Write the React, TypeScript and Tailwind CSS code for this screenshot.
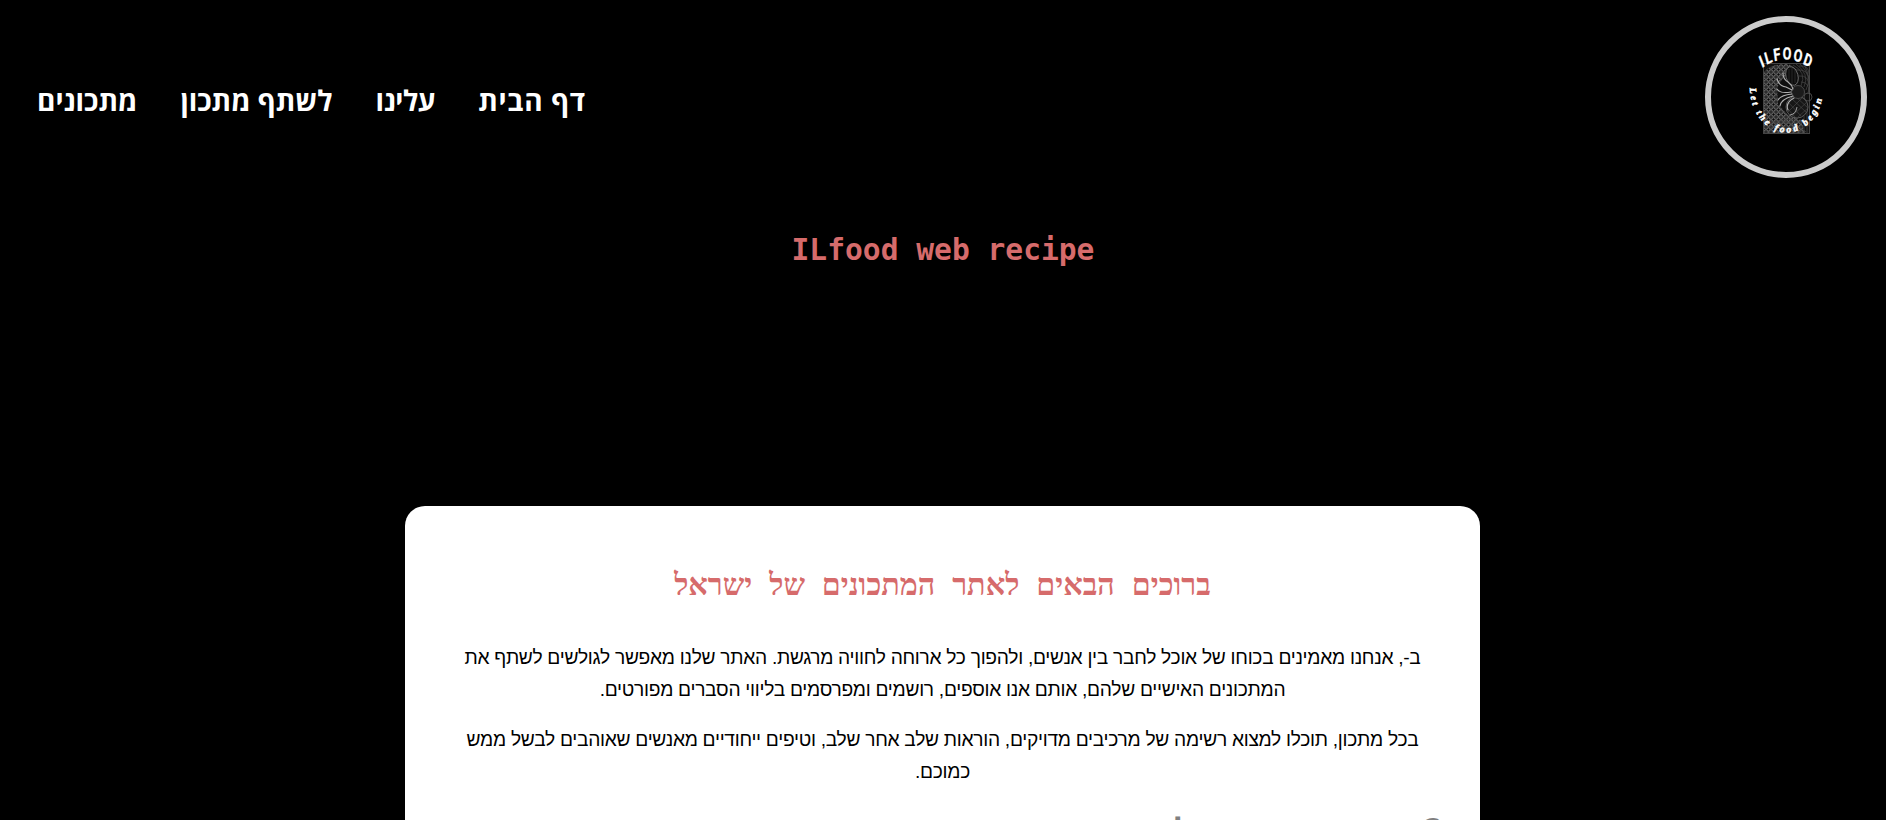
export default function App() {
  return (
    <div dir="rtl" className="h-[820px] overflow-hidden bg-black font-['Liberation_Sans',sans-serif]">
      <header className="flex h-[195px] items-start justify-between pt-4 pr-[19px] pl-[37px]">
        <div className="size-[162px] rounded-full border-[6px] border-[#ccc]">
          <svg viewBox="0 0 150 150" className="size-[150px]">
            <defs>
              <path id="top-arc" d="M68 46 Q100 28 136 48" />
              <path id="low-arc" d="M39 66 A36.5 44.5 0 0 0 112 66" />
              <pattern id="lace" width="5" height="5" patternUnits="userSpaceOnUse">
                <rect width="5" height="5" fill="#2c2c2c" />
                <circle cx="2.500" cy="2.500" r="1.700" fill="#080808" stroke="#8a8a8a" strokeWidth=".8" />
              </pattern>
            </defs>
            <rect x="52.500" y="41.500" width="46" height="70" fill="#101010" stroke="#444" />
            <path d="M53 50Q60 41 78 42L86 48 72 56 66 66 67 82 76 92 90 98 94 111H53Z" fill="url(#lace)" />
            <g fill="none" stroke="#484848" strokeWidth=".7">
              <path d="M82 43Q96 50 90 64M85 42Q99 52 93 65M89 42Q102 54 95 68M93 42Q101 58 97 72M88 44Q98 43 98 52M86 48Q98 47 98 58M88 54Q98 53 98 64M90 60Q98 60 98 70" />
              <path d="M56 110Q72 92 95 110M58 105Q76 90 98 104M60 100Q75 94 90 110M93 94V111M96 88V111" />
            </g>
            <ellipse cx="81" cy="54" rx="6" ry="9.500" fill="#0c0c0c" stroke="#777" strokeWidth=".8" transform="rotate(-15 81 54)" />
            <path d="M78 47V60M81 46V62M84 48V61" stroke="#3a3a3a" strokeWidth=".6" />
            <circle cx="86" cy="85" r="11" fill="#171717" stroke="#6a6a6a" strokeWidth=".8" />
            <g stroke="#4d4d4d" strokeWidth=".6">
              <path d="M77 80L90 94M80 76L95 90M84 74L97 86M76 86L84 95M77 90L91 76M81 94L96 80M87 95L97 86" />
            </g>
            <path d="M79 93Q85 92 86 85" fill="none" stroke="#aaa" strokeWidth=".9" />
            <circle cx="87" cy="70" r="6.500" fill="#1b1b1b" stroke="#555" strokeWidth=".8" />
            <circle cx="97" cy="75" r="4" fill="none" stroke="#555" strokeWidth=".8" />
            <g fill="none" stroke="#b0b0b0" strokeWidth="1.100" strokeLinecap="round">
              <path d="M72 51Q72 57 77 60Q81 63 82 67M66 57Q68 64 75 65L81 68M66 67Q69 72 80 70M67 78Q70 73 81 72M69 84Q70 77 82 74M77 88Q74 81 83 76" />
            </g>
            <g transform="scale(.75 1)">
              <text className="font-['Roboto',sans-serif]" fontSize="17" fontWeight="700" fill="white" stroke="white" strokeWidth=".3" direction="ltr" textLength="67" lengthAdjust="spacing">
                <textPath href="#top-arc">ILFOOD</textPath>
              </text>
            </g>
            <text className="font-['Liberation_Serif',serif]" fontSize="9.500" fontWeight="700" fontStyle="italic" fill="white" stroke="white" strokeWidth=".5" direction="ltr" letterSpacing="2.650">
              <textPath href="#low-arc">Let the food begin</textPath>
            </text>
          </svg>
        </div>
        <nav className="flex gap-[43px] pt-[64px] text-[28px] leading-[40px] font-bold text-white font-['Open_Sans',sans-serif]">
          <a className="tracking-[0.7px]">דף הבית</a>
          <a className="tracking-[-0.4px]">עלינו</a>
          <a>לשתף מתכון</a>
          <a>מתכונים</a>
        </nav>
      </header>
      <h1 dir="ltr" className="mt-[35px] text-center font-['DejaVu_Sans_Mono',monospace] text-[29.6px] leading-[40px] font-bold text-[#d66b6b]">
        ILfood web recipe
      </h1>
      <main className="mt-[236px] mr-[406px] h-[400px] w-[1075px] rounded-[20px] bg-white px-10 pt-[59px] text-center text-black">
        <h2 className="text-[30.4px] leading-[40px] font-bold text-[#d66b6b] font-['Liberation_Serif',serif] [word-spacing:9.3px]">
          ברוכים הבאים לאתר המתכונים של ישראל
        </h2>
        <div className="tracking-[-0.28px]">
          <p className="mt-[37px] text-[19.2px] leading-[32px]">
            ב-, אנחנו מאמינים בכוחו של אוכל לחבר בין אנשים, ולהפוך כל ארוחה לחוויה מרגשת. האתר שלנו מאפשר לגולשים לשתף את<br />המתכונים האישיים שלהם, אותם אנו אוספים, רושמים ומפרסמים בליווי הסברים מפורטים.
          </p>
          <p className="mt-[18px] text-[19.2px] leading-[32px]">
            בכל מתכון, תוכלו למצוא רשימה של מרכיבים מדויקים, הוראות שלב אחר שלב, וטיפים ייחודיים מאנשים שאוהבים לבשל ממש<br />כמוכם.
          </p>
        </div>
        <h2 className="mt-[21px] -mr-px flex justify-start gap-[234px] text-[32px] leading-[40px] font-bold text-[#808080] font-['Open_Sans',sans-serif]">
          <span>?</span>
          <span>ל</span>
        </h2>
      </main>
    </div>
  );
}
